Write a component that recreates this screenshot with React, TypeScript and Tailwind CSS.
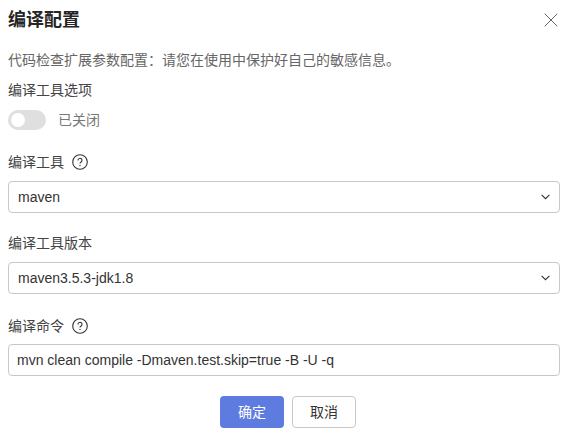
import React from "react";

const cjk = "font-['Liberation_Sans','Noto_Sans_CJK_SC',sans-serif]";

function Help() {
  return (
    <svg width="16" height="16" viewBox="0 0 16 16" fill="none" className="shrink-0">
      <circle cx="8" cy="8" r="7.3" stroke="#333" strokeWidth="1.1" />
      <path d="M6 6.4a2 2 0 1 1 3.1 1.6c-.7.5-1.1.8-1.1 1.6" stroke="#333" strokeWidth="1.1" fill="none" />
      <circle cx="8" cy="11.5" r=".7" fill="#333" />
    </svg>
  );
}

function Chevron() {
  return (
    <svg width="9" height="6" viewBox="0 0 9 6" fill="none" className="shrink-0">
      <path d="M.6.8 4.5 4.7 8.4.8" stroke="#333" strokeWidth="1.1" />
    </svg>
  );
}

function Select({ value }: { value: string }) {
  return (
    <div className="h-8 flex items-center justify-between border border-[#c8c8c8] rounded-[4px] pl-[9px] pr-[9px] text-[14px] text-[#333]">
      <span>{value}</span>
      <Chevron />
    </div>
  );
}

export default function App() {
  return (
    <div className={`w-[577px] h-[440px] bg-white px-2 overflow-hidden ${cjk}`}>
      <div className="w-[552px]">
        <div className="flex items-center justify-between h-5 mt-[10px]">
          <h1 className="text-[18px] font-bold text-[#252525] leading-5">编译配置</h1>
          <svg width="14" height="14" viewBox="0 0 14 14" fill="none" className="mr-[2px]">
            <path d="M.7.7l12.6 12.6M13.3.7.7 13.3" stroke="#666" strokeWidth="1" />
          </svg>
        </div>
        <p className="mt-[20px] text-[14px] leading-5 text-[#666] whitespace-nowrap">
          代码检查扩展参数配置：请您在使用中保护好自己的敏感信息。
        </p>
        <div className="mt-[10px] text-[14px] leading-5 text-[#444]">编译工具选项</div>
        <div className="mt-[10px] flex items-center gap-3 h-5">
          <div className="w-[38px] h-5 rounded-full bg-[#dfdfdf] flex items-center pl-[3px]">
            <div className="w-[14px] h-[14px] rounded-full bg-white" />
          </div>
          <span className="text-[14px] text-[#777]">已关闭</span>
        </div>
        <div className="mt-[22px] flex items-center gap-2 h-5 text-[14px] text-[#444]">
          <span>编译工具</span> <Help />
        </div>
        <div className="mt-[9px]">
          <Select value="maven" />
        </div>
        <div className="mt-[20px] h-5 leading-5 text-[14px] text-[#444]">编译工具版本</div>
        <div className="mt-[9px]">
          <Select value="maven3.5.3-jdk1.8" />
        </div>
        <div className="mt-[22px] flex items-center gap-2 h-5 text-[14px] text-[#444]">
          <span>编译命令</span> <Help />
        </div>
        <div className="mt-[8px] h-8 flex items-center border border-[#c8c8c8] rounded-[4px] pl-2 text-[14px] text-[#333]">
          mvn clean compile -Dmaven.test.skip=true -B -U -q
        </div>
        <div className="mt-[20px] flex justify-center gap-2 pl-[8px]">
          <button className="w-16 h-8 rounded-[4px] bg-[#5e7ce0] text-white text-[14px]">确定</button>
          <button className="w-16 h-8 rounded-[4px] border border-[#c8c8c8] bg-white text-[#333] text-[14px]">取消</button>
        </div>
      </div>
    </div>
  );
}
